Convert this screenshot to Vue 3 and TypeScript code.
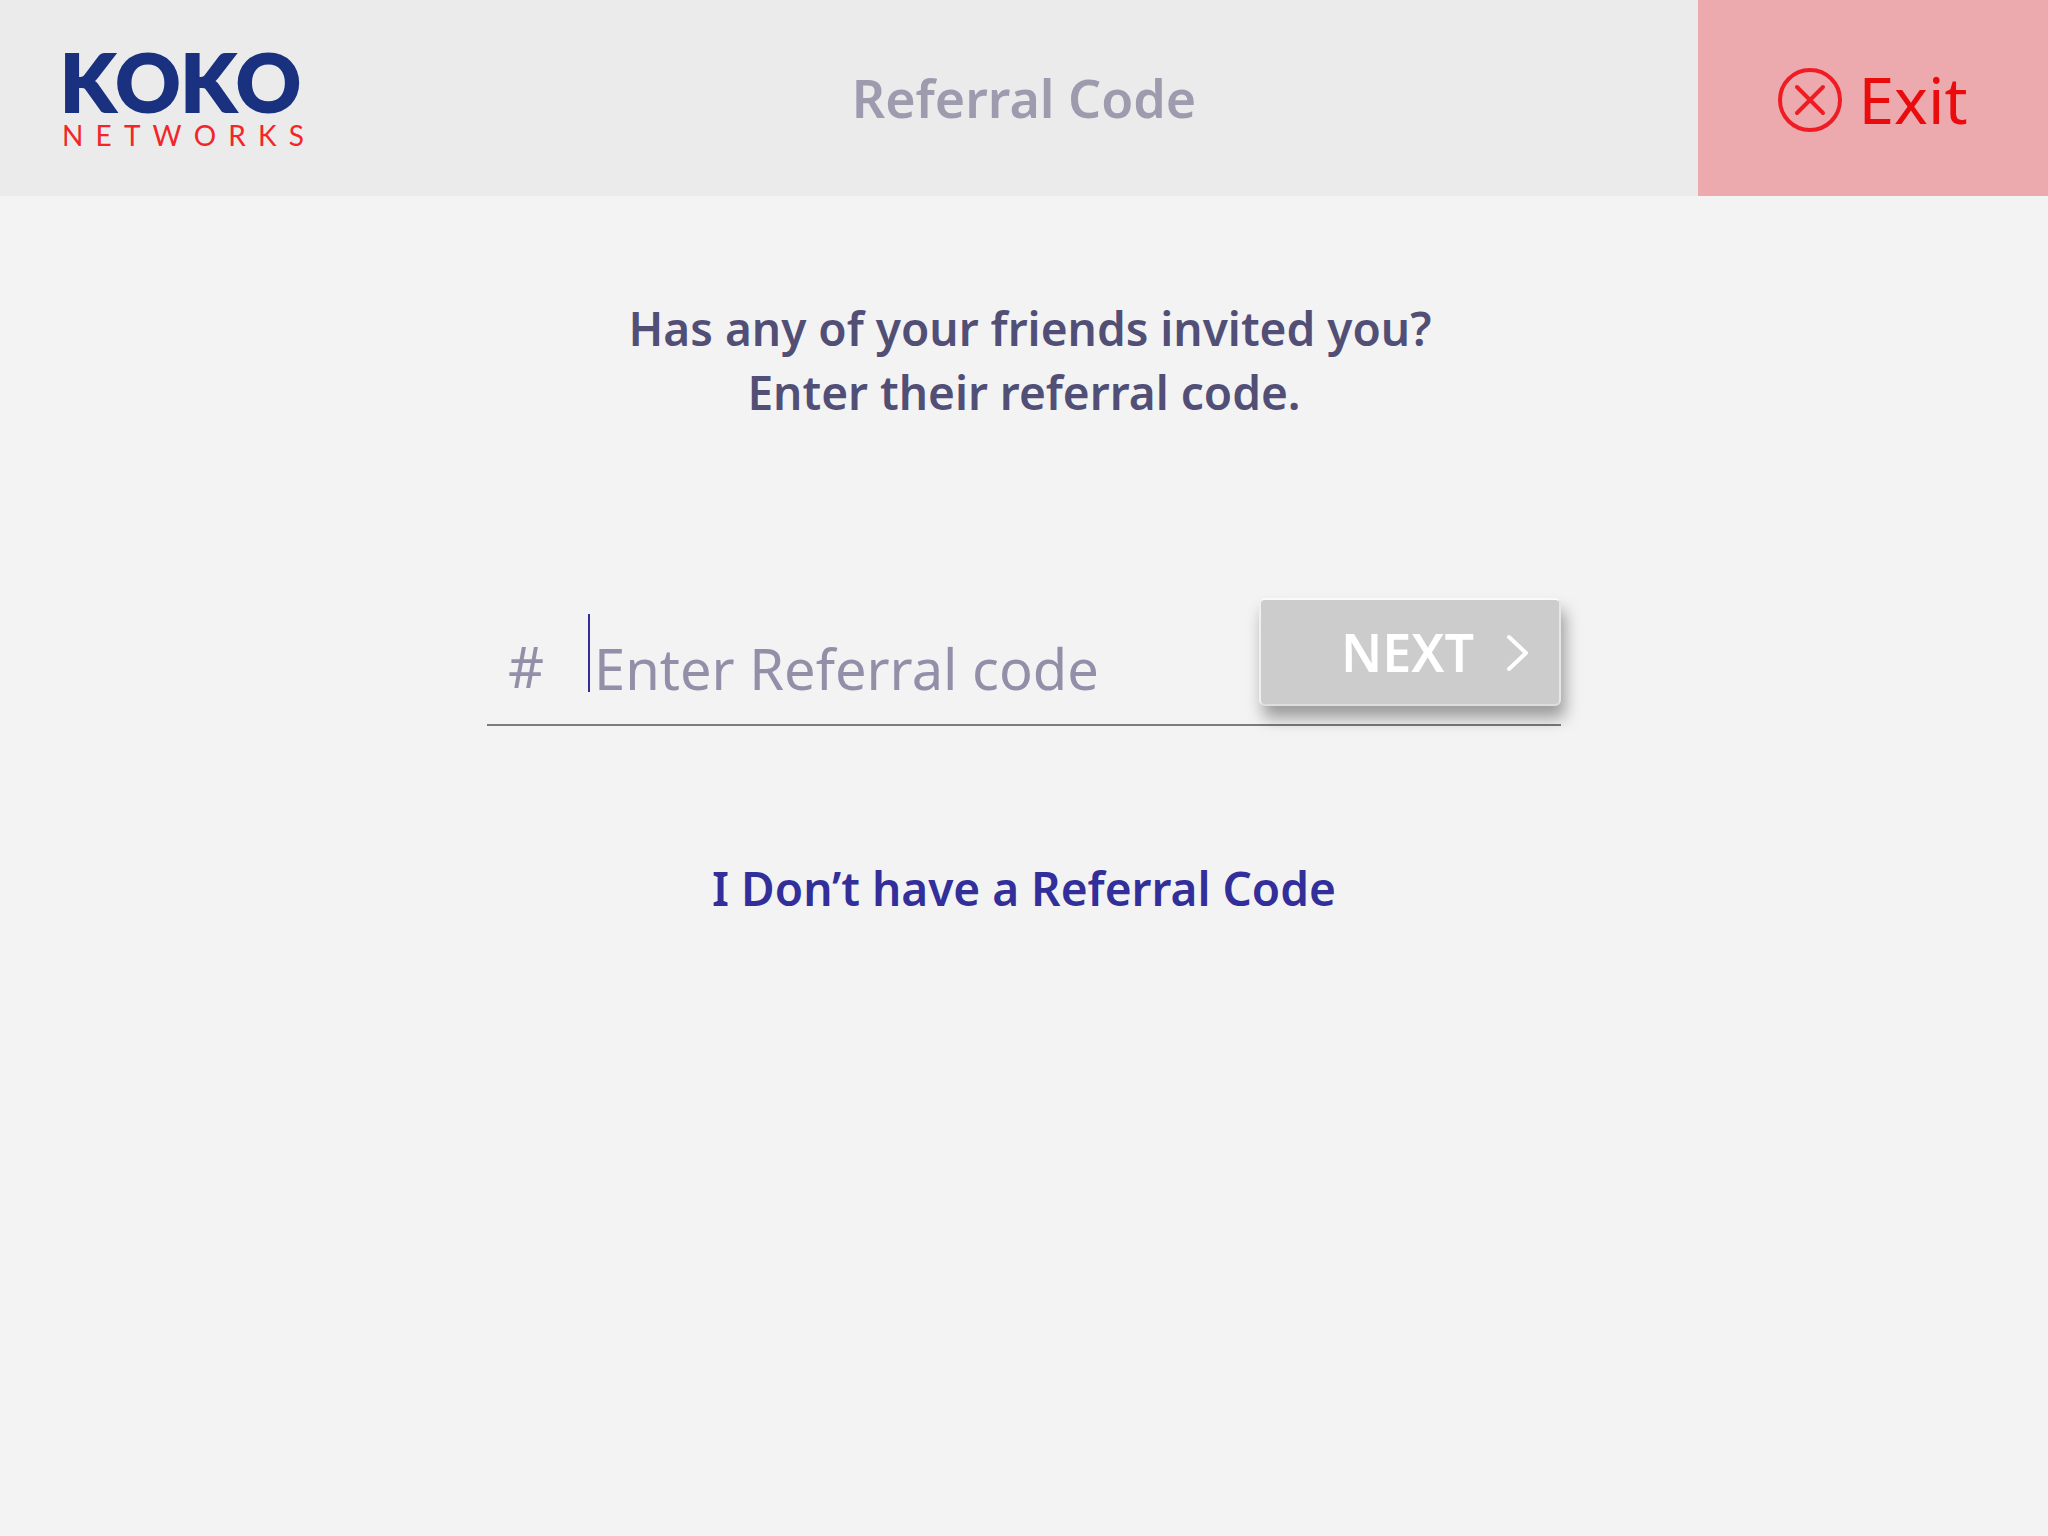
<script setup lang="ts">
import { ref } from 'vue'

const code = ref('')
const wordmark: string[] = [...'NETWORKS']
</script>

<template>
  <div class="screen">
    <header class="bar">
      <div class="logo" role="img" aria-label="KOKO Networks">
        <span class="logo-name">KOKO</span>
        <span class="logo-sub"><span v-for="(letter, i) in wordmark" :key="i">{{ letter }}</span></span>
      </div>
      <h1 class="title">Referral Code</h1>
      <button class="exit" type="button">
        <svg class="exit-icon" viewBox="0 0 64 64" aria-hidden="true">
          <circle cx="32" cy="32" r="30" />
          <path d="M19 19 45 45M45 19 19 45" />
        </svg>
        <span>Exit</span>
      </button>
    </header>

    <main class="content">
      <p class="prompt">&nbsp;Has any of your friends invited you?<br />Enter their referral code.</p>

      <form class="entry" @submit.prevent>
        <label class="hash" for="code">#</label>
        <span v-if="!code" class="caret" aria-hidden="true"></span>
        <input id="code" v-model="code" class="field" type="text" placeholder="Enter Referral code" autocomplete="off" />
        <button class="next" type="submit">
          <span>NEXT</span>
          <svg class="chevron" viewBox="0 0 22 36" aria-hidden="true">
            <path d="M3 3 20 19 3 35" />
          </svg>
        </button>
      </form>

      <a class="skip" href="#">I Don’t have a Referral Code</a>
    </main>
  </div>
</template>

<style>
body {
  margin: 0;
  background: #f3f3f3;
}
</style>

<style scoped>
.screen {
  font-family: 'Noto Sans', 'Open Sans', sans-serif;
}

.bar {
  display: grid;
  grid-template-columns: 1fr auto 1fr;
  align-items: center;
  height: 196px;
  background: #ebebeb;
}

.logo {
  display: flex;
  flex-direction: column;
  gap: 10px;
  width: 244px;
  margin-left: 60px;
  font-family: Lato, sans-serif;
}

.logo-name {
  color: #19317f;
  font-size: 80px;
  font-weight: 900;
  font-kerning: none;
  line-height: 64px;
  -webkit-text-stroke: 2px #19317f;
}

.logo-sub {
  display: flex;
  justify-content: space-between;
  padding-left: 2px;
  color: #f32528;
  font-size: 28px;
  line-height: 24px;
}

.title {
  margin: 0;
  color: #9f9baf;
  font-size: 52px;
  font-weight: 600;
  line-height: 64px;
}

.exit {
  display: flex;
  align-items: center;
  justify-content: center;
  justify-self: end;
  gap: 16px;
  box-sizing: border-box;
  width: 350px;
  height: 100%;
  padding: 4px 0 0;
  border: 0;
  background: #ecaaae;
  color: #ea0c0c;
  font-family: inherit;
  font-size: 64px;
  line-height: 64px;
}

.exit-icon {
  width: 64px;
  height: 64px;
  fill: none;
  stroke: #f01c24;
  stroke-width: 4;
  stroke-linecap: round;
}

.content {
  display: flex;
  flex-direction: column;
  align-items: center;
  padding: 100px 32px 0;
}

.prompt {
  margin: 0;
  color: #524f77;
  font-size: 46px;
  font-weight: 600;
  line-height: 64px;
  text-align: center;
}

.entry {
  display: flex;
  align-items: flex-start;
  box-sizing: border-box;
  width: 100%;
  max-width: 1074px;
  height: 128px;
  margin-top: 174px;
  border-bottom: 2px solid #7b7b7b;
}

.hash {
  width: 80px;
  margin: 36px 0 0 21px;
  color: #938fa9;
  font-size: 56px;
  line-height: 64px;
}

.caret {
  width: 2px;
  height: 78px;
  margin-top: 16px;
  background: #322e9a;
}

.field {
  flex: 1;
  min-width: 0;
  height: 64px;
  margin-top: 38px;
  padding: 0 0 0 4px;
  border: 0;
  outline: 0;
  background: transparent;
  color: #524f77;
  font-family: inherit;
  font-size: 56px;
  line-height: 64px;
}

.field::placeholder {
  color: #938fa9;
  opacity: 1;
}

.next {
  display: flex;
  align-items: center;
  justify-content: flex-end;
  gap: 32px;
  box-sizing: border-box;
  width: 302px;
  height: 108px;
  padding: 0 31px 0 0;
  border: 2px solid;
  border-color: #fafafa #e6e6e6 #dedede #f0f0f0;
  border-radius: 6px;
  background: #ccc;
  box-shadow: 4px 12px 16px rgba(0, 0, 0, 0.36);
  color: #fff;
  font-family: inherit;
  font-size: 52px;
  font-weight: 600;
  line-height: 64px;
}

.chevron {
  width: 22px;
  height: 36px;
  overflow: visible;
  fill: none;
  stroke: #fff;
  stroke-width: 4;
  stroke-linecap: round;
  stroke-linejoin: round;
}

.skip {
  margin-top: 130px;
  color: #322e9a;
  font-size: 46px;
  font-weight: 600;
  line-height: 64px;
  text-decoration: none;
}
</style>
